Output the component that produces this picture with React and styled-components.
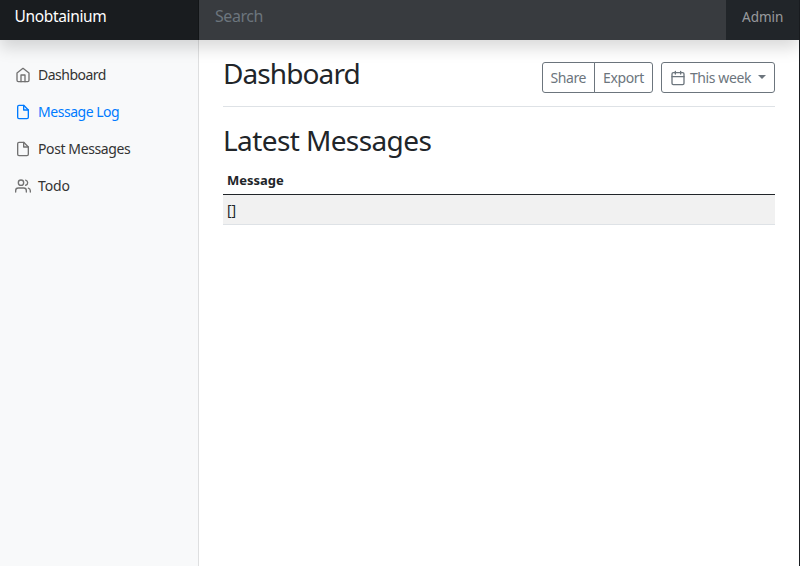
import React from 'react';
import styled, { createGlobalStyle } from 'styled-components';

const GlobalStyle = createGlobalStyle`
  *, *::before, *::after { box-sizing: border-box; }
  body {
    margin: 0;
    overflow: hidden;
    background: #fff;
    color: #212529;
    font-family: 'Noto Sans', 'Open Sans', sans-serif;
    font-size: 16px;
    line-height: 1.5;
  }
`;

const Page = styled.div`
  display: flex;
  flex-direction: column;
  width: 100vw;
  height: 100vh;
  border-right: 1px solid #1a1d21;
`;

const Header = styled.header`
  position: relative;
  z-index: 1;
  display: flex;
  flex: none;
  height: 40px;
  background: #212529;
  box-shadow: 0 8px 16px rgba(0, 0, 0, 0.15);
`;

const Brand = styled.a`
  flex: none;
  width: 199px;
  padding: 4px 14.5px;
  background: #191c1f;
  box-shadow: inset -1px 0 0 rgba(0, 0, 0, 0.25);
  color: #fff;
  font-size: 15.5px;
  line-height: 24px;
  letter-spacing: -0.35px;
`;

const Search = styled.input`
  flex: 1;
  min-width: 0;
  height: 40px;
  padding: 0 16px 8px;
  border: 0;
  outline: 0;
  background: #383b3f;
  color: #fff;
  font: inherit;
  letter-spacing: -0.45px;
  &::placeholder { color: #6c757d; opacity: 1; }
`;

const Account = styled.a`
  flex: none;
  width: 73px;
  padding: 6px 0 0 16px;
  color: rgba(255, 255, 255, 0.55);
  font-size: 13.5px;
  line-height: 22px;
`;

const Body = styled.div`
  display: flex;
  flex: 1;
  min-height: 0;
`;

const Sidebar = styled.nav`
  display: flex;
  flex: none;
  flex-direction: column;
  width: 199px;
  padding-top: 16px;
  background: #f8f9fa;
  border-right: 1px solid #dedfe0;
`;

const NavLink = styled.a`
  display: flex;
  align-items: center;
  gap: 7px;
  height: 37px;
  padding-left: 15px;
  color: ${(p) => (p.$active ? '#007bff' : '#333')};
  font-size: 14px;
  line-height: 21px;
  letter-spacing: ${(p) => p.$tracking || 0}px;
  svg { color: ${(p) => (p.$active ? 'inherit' : '#727272')}; }
`;

const Icon = styled.svg`
  flex: none;
  width: 16px;
  height: 16px;
  fill: none;
  stroke: currentColor;
  stroke-width: 2;
  stroke-linecap: round;
  stroke-linejoin: round;
`;

const Main = styled.main`
  flex: 1;
  min-width: 0;
  padding: 16px 24px;
`;

const TitleBar = styled.div`
  display: flex;
  justify-content: space-between;
  height: 51px;
  margin-bottom: 16px;
  border-bottom: 1px solid #dee2e6;
`;

const Heading = styled.h2`
  margin: 0;
  font-size: 28px;
  font-weight: 400;
  line-height: 34px;
  letter-spacing: ${(p) => p.$tracking || 0}px;
`;

const Toolbar = styled.div`
  display: flex;
  gap: 8px;
  padding-top: 6px;
`;

const ButtonGroup = styled.div`
  display: flex;
`;

const Button = styled.button`
  display: flex;
  align-items: center;
  width: ${(p) => p.$width}px;
  height: 31px;
  padding: 0 0 0 ${(p) => p.$inset || 8}px;
  border: 1px solid #6c757d;
  border-radius: 3px;
  background: transparent;
  color: #6c757d;
  font: 14px/21px 'Noto Sans', sans-serif;
  letter-spacing: ${(p) => p.$tracking || 0}px;
  white-space: nowrap;
  ${ButtonGroup} &:first-child { border-radius: 3px 0 0 3px; }
  ${ButtonGroup} &:last-child { margin-left: -1px; border-radius: 0 3px 3px 0; }
`;

const ButtonText = styled.span`
  width: 62px;
  margin-left: 3.5px;
`;

const Caret = styled.span`
  margin: -2px 0 0 6px;
  border: 4px solid transparent;
  border-top-color: currentColor;
  border-bottom: 0;
`;

const Table = styled.table`
  width: 100%;
  margin-top: 8px;
  border-collapse: collapse;
  font-size: 14px;
  line-height: 21px;
`;

const HeadCell = styled.th`
  height: 29px;
  padding: 5px 4px 2px;
  border-bottom: 1px solid #212529;
  font-size: 13px;
  font-weight: 700;
  text-align: left;
`;

const Cell = styled.td`
  height: 30px;
  padding: 4px;
  border-bottom: 1px solid #dee2e6;
  background: #f1f1f1;
`;

const icons = {
  home: (
    <>
      <path d="M3 9l9-7 9 7v11a2 2 0 0 1-2 2H5a2 2 0 0 1-2-2z" />
      <path d="M9 22V12h6v10" />
    </>
  ),
  file: (
    <>
      <path d="M13 2H6a2 2 0 0 0-2 2v16a2 2 0 0 0 2 2h12a2 2 0 0 0 2-2V9z" />
      <path d="M13 2v7h7" />
    </>
  ),
  users: (
    <>
      <path d="M17 21v-2a4 4 0 0 0-4-4H5a4 4 0 0 0-4 4v2" />
      <circle cx="9" cy="7" r="4" />
      <path d="M23 21v-2a4 4 0 0 0-3-3.87" />
      <path d="M16 3.13a4 4 0 0 1 0 7.75" />
    </>
  ),
  calendar: (
    <>
      <rect x="3" y="4" width="18" height="18" rx="2" />
      <path d="M16 2v4M8 2v4M3 10h18" />
    </>
  ),
};

const Glyph = ({ name }) => (
  <Icon viewBox="0 0 24 24" aria-hidden="true">{icons[name]}</Icon>
);

const links = [
  { label: 'Dashboard', icon: 'home', tracking: -0.5 },
  { label: 'Message Log', icon: 'file', active: true, tracking: -0.47 },
  { label: 'Post Messages', icon: 'file', tracking: -0.4 },
  { label: 'Todo', icon: 'users', tracking: -0.1 },
];

export default function App() {
  return (
    <>
      <GlobalStyle />
      <Page>
        <Header>
          <Brand>Unobtainium</Brand>
          <Search placeholder="Search" aria-label="Search" />
          <Account>Admin</Account>
        </Header>
        <Body>
          <Sidebar>
            {links.map((l) => (
              <NavLink key={l.label} $active={l.active} $tracking={l.tracking}>
                <Glyph name={l.icon} />
                {l.label}
              </NavLink>
            ))}
          </Sidebar>
          <Main>
            <TitleBar>
              <Heading as="h1" $tracking={-0.9}>Dashboard</Heading>
              <Toolbar>
                <ButtonGroup>
                  <Button $width={53} $inset={7.5} $tracking={-0.4}>Share</Button>
                  <Button $width={59} $tracking={-0.35}>Export</Button>
                </ButtonGroup>
                <Button $width={114} $tracking={-0.4}>
                  <Glyph name="calendar" />
                  <ButtonText>This week</ButtonText>
                  <Caret />
                </Button>
              </Toolbar>
            </TitleBar>
            <Heading $tracking={-0.6}>Latest Messages</Heading>
            <Table>
              <thead>
                <tr><HeadCell>Message</HeadCell></tr>
              </thead>
              <tbody>
                <tr><Cell>[]</Cell></tr>
              </tbody>
            </Table>
          </Main>
        </Body>
      </Page>
    </>
  );
}
